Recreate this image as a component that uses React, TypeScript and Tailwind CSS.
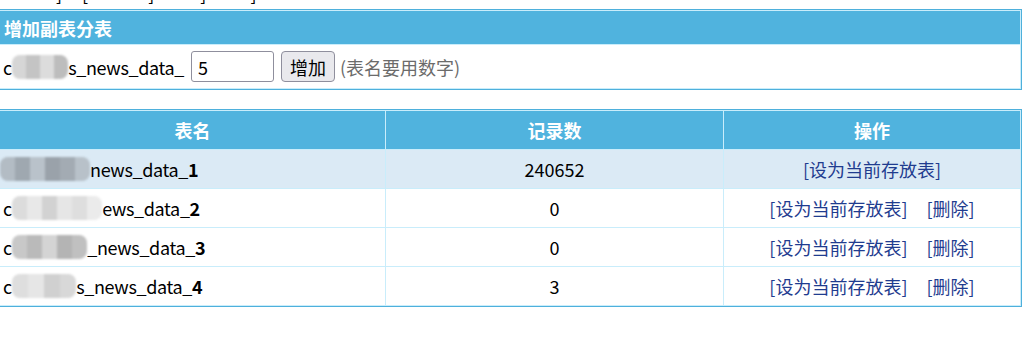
import React from 'react'

const redactions = {
  top: ['bg-[#d6d6d6]', 'bg-[#c4c4c4]', 'bg-[#dcdcdc]', 'bg-[#bdbdbd]'],
  r1: ['bg-[#b3bcc4]', 'bg-[#9fa8b0]', 'bg-[#b9c2ca]', 'bg-[#9aa2aa]', 'bg-[#a3abb3]', 'bg-[#b8c1c9]'],
  r2: ['bg-[#dcdcdc]', 'bg-[#e8e8e8]', 'bg-[#d2d2d2]', 'bg-[#e6e6e6]', 'bg-[#dedede]', 'bg-[#ebebeb]'],
  r3: ['bg-[#c8c8c8]', 'bg-[#bababa]', 'bg-[#d4d4d4]', 'bg-[#b4b4b4]', 'bg-[#c0c0c0]'],
  r4: ['bg-[#dedede]', 'bg-[#e6e6e6]', 'bg-[#d0d0d0]', 'bg-[#d8d8d8]'],
}

function Redact({ blocks, cell = 'w-[15px]' }: { blocks: string[]; cell?: string }) {
  return (
    <span className="inline-flex h-[24px] overflow-hidden rounded-[8px] blur-[1px] align-middle shrink-0">
      {blocks.map((c, i) => (
        <span key={i} className={`${cell} h-full ${c}`} />
      ))}
    </span>
  )
}

const rows = [
  { pre: '', blocks: redactions.r1, cell: 'w-[15px]', rest: 'news_data_', num: '1', count: '240652', current: true },
  { pre: 'c', blocks: redactions.r2, cell: 'w-[15px]', rest: 'ews_data_', num: '2', count: '0', current: false },
  { pre: 'c', blocks: redactions.r3, cell: 'w-[15px]', rest: '_news_data_', num: '3', count: '0', current: false },
  { pre: 'c', blocks: redactions.r4, cell: 'w-[16px]', rest: 's_news_data_', num: '4', count: '3', current: false },
]

export default function App() {
  return (
    <div className="w-[1031px] h-[345px] overflow-hidden bg-white text-black text-[18px] leading-none font-['Noto_Sans_CJK_SC','Noto_Sans',sans-serif]">
      {/* clipped line above: only the descenders show */}
      <div className="h-[9px] overflow-hidden">
        <div className="mt-[-18px] h-[22px] flex items-end leading-[22px]">
          <span className="ml-[56px]">]</span>
          <span className="ml-[20px]">[</span>
          <span className="ml-[60px]">]</span>
          <span className="ml-[46px]">]</span>
          <span className="ml-[44px]">]</span>
        </div>
      </div>

      {/* add sub table */}
      <div className="ml-[-2px] w-[1024px] border border-[#4eb0dc] bg-[#c9edfb] p-px flex flex-col gap-px">
        <div className="h-[33px] bg-[#50b3de] text-white font-bold pl-[4px] flex items-center">增加副表分表</div>
        <div className="h-[43px] bg-white pl-[3px] flex items-center">
          <span>c</span>
          <Redact blocks={redactions.top} cell="w-[14px]" />
          <span className="tracking-[-0.35px]">s_news_data_</span>
          <input
            defaultValue="5"
            className="ml-[7px] w-[83px] h-[31px] border border-[#8f8f9d] rounded-[3px] px-[6px] text-[18px] outline-none"
          />
          <button className="ml-[7px] w-[54px] h-[31px] border border-[#8f8f9d] rounded-[4px] bg-[#e9e9ed] text-[18px]">增加</button>
          <span className="ml-[5px] text-[#6b6b6b]">(表名要用数字)</span>
        </div>
      </div>

      {/* tables list */}
      <div className="mt-[19px] ml-[-2px] w-[1024px] border border-[#4eb0dc] bg-[#c9edfb] p-px grid grid-cols-[385px_337px_296px] gap-px">
        {['表名', '记录数', '操作'].map((h) => (
          <div key={h} className="h-[38px] bg-[#50b3de] text-white font-bold flex items-center justify-center">
            {h}
          </div>
        ))}
        {rows.map((r) => {
          const bg = r.current ? 'bg-[#dbeaf5]' : 'bg-white'
          return (
            <React.Fragment key={r.num}>
              <div className={`h-[38px] ${bg} ${r.pre ? 'pl-[3px]' : ''} flex items-center`}>
                {r.pre && <span>{r.pre}</span>}
                <Redact blocks={r.blocks} cell={r.cell} />
                <span className="tracking-[-0.35px]">{r.rest}</span>
                <b>{r.num}</b>
              </div>
              <div className={`h-[38px] ${bg} flex items-center justify-center`}>{r.count}</div>
              <div className={`h-[38px] ${bg} flex items-center justify-center text-[#1f3c8f]`}>
                <a className="text-[#1f3c8f] cursor-pointer">[设为当前存放表]</a>
                {!r.current && <a className="ml-[19px] text-[#1f3c8f] cursor-pointer">[删除]</a>}
              </div>
            </React.Fragment>
          )
        })}
      </div>
    </div>
  )
}
